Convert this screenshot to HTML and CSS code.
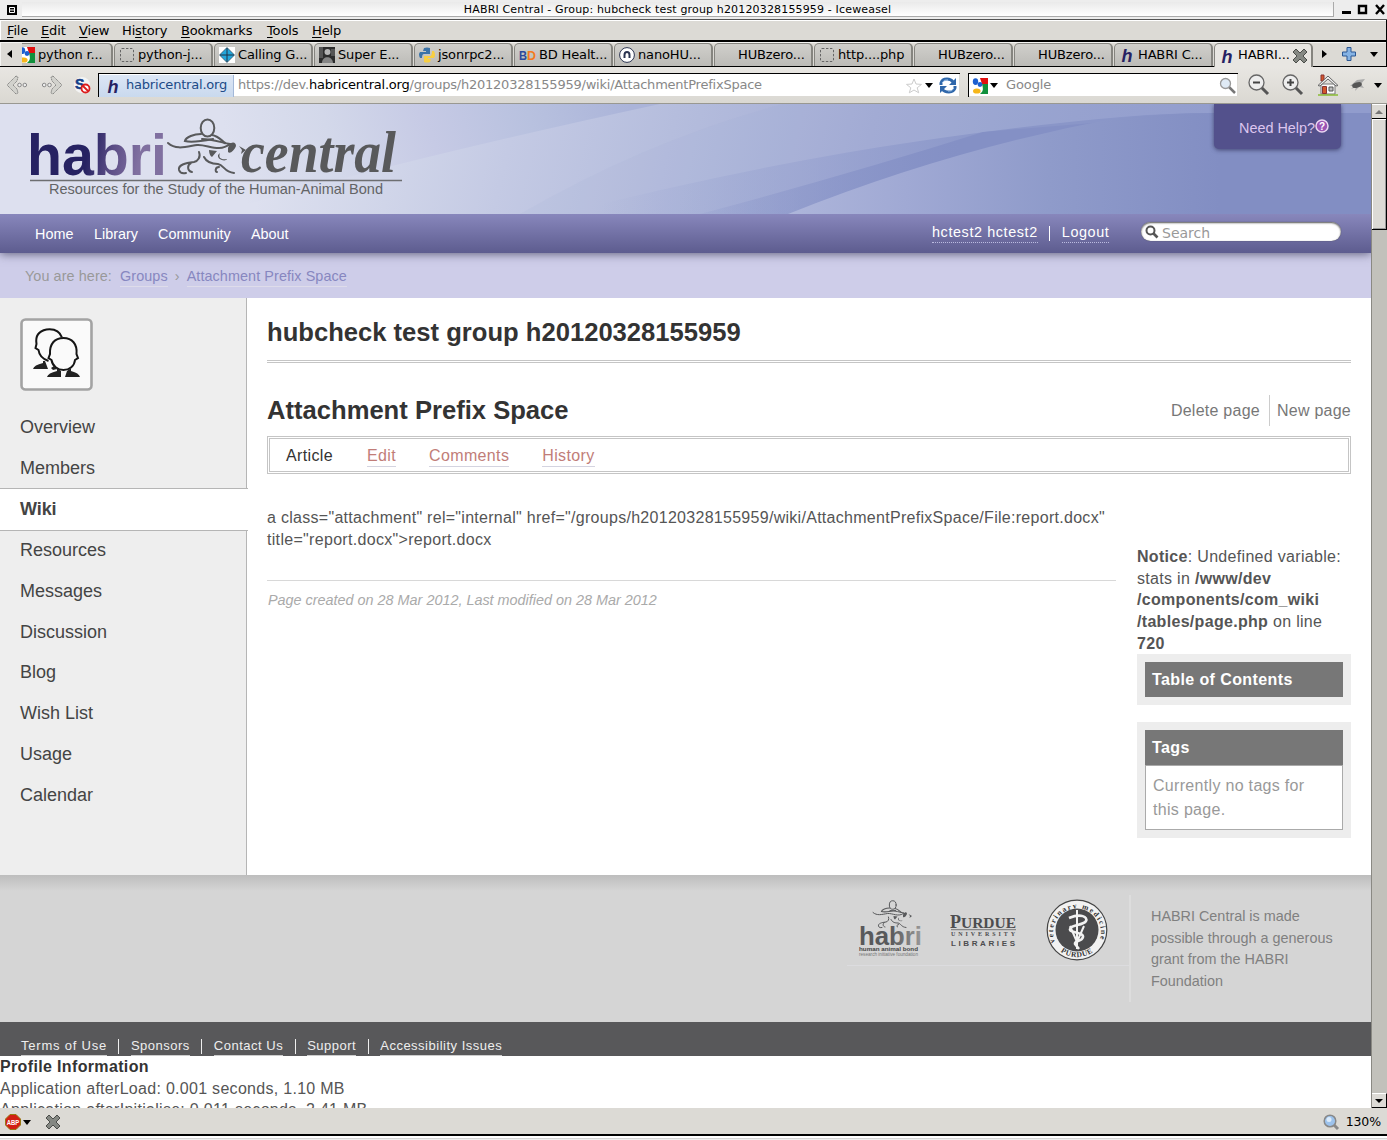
FILE: index.html
```html
<!DOCTYPE html>
<html lang="en">
<head>
<meta charset="utf-8">
<title>HABRI Central - Group: hubcheck test group h20120328155959</title>
<link rel="stylesheet" href="styles.css">
</head>
<body>
<svg width="0" height="0" class="defs">
  <defs>
    <symbol id="blank" viewBox="0 0 16 16"><rect x="1.5" y="1.5" width="13" height="13" rx="1.5" fill="none" stroke="#666" stroke-dasharray="2.4 1.6"/></symbol>
    <symbol id="h" viewBox="0 0 16 16"><text x="2.5" y="14.5" font-family="Liberation Sans" font-weight="bold" font-style="italic" font-size="18" fill="#262262">h</text></symbol>
    <symbol id="google" viewBox="0 0 16 16"><path d="M0 0h16v16H0z" fill="#fff"/><path d="M8 0h8v6H10z" fill="#e01010"/><path d="M10 6h6v10H8c4-3 3-6 2-10z" fill="#10903c"/><ellipse cx="3.5" cy="3.6" rx="2.7" ry="3.4" fill="#1c5fd0"/><circle cx="8" cy="6.5" r="2.4" fill="#1c5fd0"/><ellipse cx="4.8" cy="13" rx="3.8" ry="2.6" fill="#f6b619"/></symbol>
    <symbol id="x" viewBox="0 0 16 16"><path d="M4 1l4 4 4-4 3 3-4 4 4 4-3 3-4-4-4 4-3-3 4-4-4-4z" fill="#858883" stroke="#4b4d4a"/></symbol>
    <symbol id="arrow" viewBox="0 0 22 20"><path d="M10 1L1 10l9 9 2-1-1-4-4-4 4-4 1-4z" fill="#d2d2cd" stroke="#8a8a88" stroke-dasharray="1.5 .5"/><circle cx="13.5" cy="10" r="1.8" fill="#eee" stroke="#888"/><circle cx="18.8" cy="10" r="1.8" fill="#eee" stroke="#888"/></symbol>
    <symbol id="animal" viewBox="166 116 82 62">
      <g fill="none" stroke="#58595b" stroke-width="2" stroke-linecap="round">
        <ellipse cx="207.500" cy="128" rx="6.800" ry="8.500"/>
        <path d="M201 134c-7 0-15 3-16 7 6 2 18 0 28-2M212 135c6 1 9 5 13 8" stroke-width="2.200"/>
        <path d="M168 143c8 7 17 4 29 2 10-1 22 8 33-1-7-1-18-5-28-5"/>
        <path d="M199 152c2 5-1 9-5 10-9 1-16 3-15 8 1 3 3 4 7 3M191 163c-4 2-4 8 1 9"/>
        <path d="M204 157c3 6 8 7 14 7 6 1 6 8 16 9M219 167c-4 0-4 5-2 5"/>
      </g>
      <path d="M228 148c2-7 8-7 8-2-2 5-6 8-8 6zM209 150l8 1-5 6c-2-1-3-4-3-7zM220 153c-2 5 1 7 7 6-1 3-10 1-9-4zM239 146l7 4-5 4 1-4z" fill="#58595b"/>
    </symbol>
  </defs>
</svg>
<div class="window">
  <header class="titlebar">
    <svg width="22" height="19"><rect x="7" y="5" width="10" height="10"/><path d="M9.500 7.500h5v5h-5zM9 10h6" fill="none" stroke="#fff"/></svg>
    <div class="caption">HABRI Central - Group: hubcheck test group h20120328155959 - Iceweasel</div>
    <svg width="53" height="19" fill="none" stroke="#000"><path d="M8 12.500h9" stroke-width="3"/><path d="M25 6h7v7h-7z" stroke-width="2.400"/><path d="M42 5l8 9M50 5l-8 9" stroke-width="2.400"/></svg>
  </header>
  <nav class="menubar">
    <span class="m1"><u>F</u>ile</span><span class="m2"><u>E</u>dit</span><span class="m3"><u>V</u>iew</span><span class="m4">Hi<u>s</u>tory</span><span class="m5"><u>B</u>ookmarks</span><span class="m6"><u>T</u>ools</span><span><u>H</u>elp</span>
  </nav>
  <div class="tabs">
    <div class="tabscroll"><i class="left"></i></div>
    <div class="tab first"><svg width="16" height="16"><use href="#google"/></svg><span>python r...</span></div>
    <div class="tab"><svg width="16" height="16"><use href="#blank"/></svg><span>python-j...</span></div>
    <div class="tab"><svg width="16" height="16"><path d="M0 0h16v16H0z" fill="#fff"/><path d="M8 .5L15.500 8 8 15.500.5 8z" fill="#22a7dc" stroke="#345" stroke-width=".7"/><path d="M8 1v14M1 8h14" stroke="#234"/></svg><span>Calling G...</span></div>
    <div class="tab"><svg width="16" height="16"><path d="M0 0h16v16H0z" fill="#2c2c2c"/><path d="M0 0h4v11H0zM12 2h4v7h-4z" fill="#555"/><circle cx="8.500" cy="5" r="3" fill="#b5b5b5"/><path d="M3 16c0-7 10-8 11 0z" fill="#858585"/></svg><span>Super E...</span></div>
    <div class="tab"><svg width="16" height="16"><path d="M5 1q3-1 6 0v6H5q-2 0-2 4H1q-2-4 0-6h6V4H4z" fill="#3b73a8"/><path d="M11 15q-3 1-6 0V9h6q2 0 2-5h2q2 4 0 7H9v1h3z" fill="#f8cf42"/></svg><span>jsonrpc2...</span></div>
    <div class="tab"><svg width="17" height="16"><text x="0" y="13" font-family="Liberation Sans" font-size="12" font-weight="bold" fill="#2b4a9a" textLength="8" lengthAdjust="spacingAndGlyphs">B</text><text x="8" y="13" font-family="Liberation Sans" font-size="12" font-weight="bold" fill="#f47a20" textLength="9" lengthAdjust="spacingAndGlyphs">D</text></svg><span>BD Healt...</span></div>
    <div class="tab"><svg width="16" height="16"><circle cx="8" cy="8" r="7.400" fill="#fff" stroke="#2b3450"/><path d="M5.500 11V8q0-3 2.500-3t2.500 3v3" fill="none" stroke="#2b3450" stroke-width="2"/></svg><span>nanoHU...</span></div>
    <div class="tab"><svg width="16" height="16"></svg><span>HUBzero...</span></div>
    <div class="tab"><svg width="16" height="16"><use href="#blank"/></svg><span>http....php</span></div>
    <div class="tab"><svg width="16" height="16"></svg><span>HUBzero...</span></div>
    <div class="tab"><svg width="16" height="16"></svg><span>HUBzero...</span></div>
    <div class="tab"><svg width="16" height="16"><use href="#h"/></svg><span>HABRI C...</span></div>
    <div class="tab active"><svg width="16" height="16"><use href="#h"/></svg><span>HABRI...</span><svg class="close" width="16" height="16"><use href="#x"/></svg></div>
    <div class="tabtools"><i class="right"></i><svg width="16" height="16"><path d="M6 1.500h4V6h4.500v4H10v4.500H6V10H1.500V6H6z" fill="#86b3e4" stroke="#2b5793"/></svg><i class="down"></i></div>
  </div>
  <div class="toolbar">
    <svg class="back" width="22" height="20"><use href="#arrow"/></svg>
    <svg class="fwd" width="22" height="20"><use href="#arrow" transform="translate(22 0) scale(-1 1)"/></svg>
    <svg class="noscript" width="17" height="17"><circle cx="8" cy="8" r="8" fill="#f4f4f4"/><text x="1" y="12" font-family="Liberation Sans" font-weight="bold" font-size="14" fill="#153f88" stroke="#153f88" stroke-width=".6">S</text><circle cx="11.500" cy="11.500" r="4" fill="#fff" stroke="#dc1c1c" stroke-width="1.800"/><path d="M9 9l5 5" stroke="#dc1c1c" stroke-width="1.800"/></svg>
    <div class="urlbar">
      <div class="identity"><svg width="16" height="18"><use href="#h"/></svg><span>habricentral.org</span></div>
      <div class="url">https://dev.<b>habricentral.org</b>/groups/h20120328155959/wiki/AttachmentPrefixSpace</div>
      <svg width="16" height="16"><path d="M8 1l2 5 5.500.4-4.300 3.400 1.500 5L8 12l-4.700 2.800 1.500-5L.5 6.400 6 6z" fill="#fff" stroke="#ccc"/></svg>
      <i class="down"></i>
      <svg width="18" height="17" fill="none" stroke="#3068ab" stroke-width="3"><path d="M2 8V6q1-4 6-4 4 0 6 3M16 9v2q-1 4-6 4-5 0-7-3"/><path d="M17 1v7h-7zM1 16V9h7z" fill="#3068ab" stroke="none"/><path d="M3 6q2-4 6-3M15 11q-2 4-6 3" stroke="#a8c8ec" stroke-width="1"/></svg>
    </div>
    <div class="searchbar"><svg width="16" height="16"><use href="#google"/></svg><i class="down"></i><span>Google</span><svg width="17" height="17"><path d="M10 10l6 6" stroke="#777" stroke-width="2.500"/><circle cx="6.500" cy="6.500" r="5" fill="#dfeaf5" stroke="#999" stroke-width="1.300"/></svg></div>
    <svg class="zo" width="22" height="22"><path d="M13 13l7 7" stroke="#555" stroke-width="3"/><circle cx="8.500" cy="8.500" r="7.500" fill="#eee" stroke="#666" stroke-width="1.300"/><path d="M5 8.500h7" stroke="#444" stroke-width="2"/></svg>
    <svg class="zi" width="22" height="22"><path d="M13 13l7 7" stroke="#555" stroke-width="3"/><circle cx="8.500" cy="8.500" r="7.500" fill="#eee" stroke="#666" stroke-width="1.300"/><path d="M5 8.500h7M8.500 5v7" stroke="#444" stroke-width="2"/></svg>
    <svg class="home" width="22" height="22"><path d="M4 1h3v6H4z" fill="#d4572a" stroke="#833"/><path d="M4 10h14v10H4z" fill="#fafafa" stroke="#777"/><path d="M1 11.500L11 2l10 9.500-2 .5-8-7-8 7z" fill="#eee" stroke="#666"/><path d="M5.500 12.500h4v7h-4z" fill="#d4572a" stroke="#833"/><path d="M12 13h4v4h-4z" fill="#bbb" stroke="#555"/><path d="M1 21h20" stroke="#8b3" stroke-width="1.500"/></svg>
    <svg class="bug" width="18" height="14"><path d="M1 8l7-6 8-1-4 5 3 4-5-1-4 4 1-4-5 2 3-3z" fill="#aaa"/><ellipse cx="8" cy="7" rx="5" ry="2.600" fill="#555" transform="rotate(-18 8 7)"/></svg>
    <i class="down"></i>
  </div>

  <div class="viewport">
    <div class="page">
      <header class="banner">
        <svg class="waves" viewBox="0 0 1371 110" width="1371" height="110">
          <defs>
            <linearGradient id="g0" gradientUnits="userSpaceOnUse" x1="280" y1="0" x2="1220" y2="230"><stop offset="0" stop-color="#dde0ef"/><stop offset=".13" stop-color="#d0d5e9"/><stop offset=".24" stop-color="#c4cae4"/><stop offset=".4" stop-color="#b5bddd"/><stop offset=".6" stop-color="#a4add5"/><stop offset=".8" stop-color="#98a3d0"/><stop offset="1" stop-color="#929dce"/></linearGradient>
            <linearGradient id="g1" gradientUnits="userSpaceOnUse" x1="240" y1="80" x2="620" y2="-30"><stop offset="0" stop-color="#dde0ef"/><stop offset=".25" stop-color="#d3d8ea"/><stop offset=".5" stop-color="#c6cae5"/><stop offset=".75" stop-color="#b8c1df"/><stop offset="1" stop-color="#abb4d9"/></linearGradient>
            <linearGradient id="g2" gradientUnits="userSpaceOnUse" x1="600" y1="0" x2="1000" y2="0"><stop offset="0" stop-color="#939ece" stop-opacity="0"/><stop offset=".5" stop-color="#939ece" stop-opacity=".45"/><stop offset="1" stop-color="#8a96c8"/></linearGradient>
            <linearGradient id="g3" gradientUnits="userSpaceOnUse" x1="690" y1="0" x2="960" y2="0"><stop offset="0" stop-color="#8591c7" stop-opacity=".1"/><stop offset="1" stop-color="#8490c5"/></linearGradient>
            <linearGradient id="g4" gradientUnits="userSpaceOnUse" x1="790" y1="0" x2="1220" y2="0"><stop offset="0" stop-color="#adb5da"/><stop offset=".27" stop-color="#a0a9d4"/><stop offset=".6" stop-color="#8f9bca"/><stop offset="1" stop-color="#828ec3"/></linearGradient>
          </defs>
          <path d="M0 0h1371v110H0z" fill="url(#g0)"/>
          <path d="M0 0h660Q400 56 213 110H0z" fill="url(#g1)"/>
          <path d="M783 0H1371V110H520Q650 35 783 0z" fill="#8a99cc" opacity=".06"/>
          <path d="M560 110Q760 60 920 37 1120 8 1213 9H1371V110z" fill="url(#g2)"/>
          <path d="M700 110Q850 70 983 28L1213 9H1371V110z" fill="url(#g3)"/>
          <path d="M788 110Q950 45 1117 14 1170 9 1213 9H1371V110z" fill="url(#g4)"/>
        </svg>
        <svg class="logo" viewBox="26 112 380 90" width="380" height="90">
          <defs><linearGradient id="lg" gradientUnits="userSpaceOnUse" x1="30" y1="0" x2="164" y2="25"><stop offset=".62" stop-color="#262262"/><stop offset=".8" stop-color="#5b4d86"/><stop offset="1" stop-color="#8070a0"/></linearGradient></defs>
          <text x="27" y="174.500" class="sans" font-weight="bold" font-size="57" fill="url(#lg)" textLength="140" lengthAdjust="spacingAndGlyphs">habri</text>
          <use href="#animal" x="166" y="116" width="82" height="62"/>
          <text x="241" y="172" font-family="Liberation Serif" font-weight="bold" font-style="italic" font-size="60" fill="#58595b" textLength="155" lengthAdjust="spacingAndGlyphs">central</text>
          <path d="M30 180.500h372" stroke="#6d6e71" stroke-width="1.500"/>
          <text x="49" y="194" class="sans" font-size="15" fill="#636466" textLength="334" lengthAdjust="spacingAndGlyphs">Resources for the Study of the Human-Animal Bond</text>
        </svg>
        <div class="help"><span>Need Help?</span><svg width="14" height="14"><circle cx="7" cy="7" r="6" fill="#9a55b5" stroke="#ead7f2" stroke-width="1.500"/><text x="4.100" y="10.500" font-family="Liberation Sans" font-weight="bold" font-size="10" fill="#fff">?</text></svg></div>
      </header>
      <nav class="nav">
        <a class="n1">Home</a><a class="n2">Library</a><a class="n3">Community</a><a>About</a>
        <div class="account"><a class="dotted">hctest2 hctest2</a><i></i><a class="dotted">Logout</a></div>
        <div class="search"><svg width="14" height="14" fill="none" stroke="#555"><circle cx="5.500" cy="5.500" r="4" stroke-width="2"/><path d="M8.500 8.500l4 4" stroke-width="2.600"/></svg><span>Search</span></div>
      </nav>
      <div class="crumbs"><span>You are here:</span><a>Groups</a><i>›</i><a>Attachment Prefix Space</a></div>
      <div class="main">
        <aside class="side">
          <svg class="group" width="73" height="73" viewBox="0 0 73 73"><rect x="1.500" y="1.500" width="70" height="70" rx="4" fill="#fafafa" stroke="#a3a3a3" stroke-width="2.600"/>
            <g fill="#fafafa" stroke="#151515" stroke-width="2"><path d="M28.500 43q-9-3-10-11l-3-2 1-4q-2-12 10-14.500 12-1.500 15.500 8"/><path d="M43.500 20c-9 0-14 6-13.500 16l-1.500 4 3 2c1 6 6 10 12 10s11-4 11.500-10l3-2-1.500-4C57.500 26 52 20 43.500 20z"/></g>
            <path d="M13 51q1-4 10-6v-2h2l3 8zM27 59q1-4 10-6v-3l4 3v6zM60 59q-1-4-9-6v-3l-4 3-2 6zM31 50l3-2 3 3-4 1z" fill="#222"/></svg>
          <ul><li>Overview</li><li>Members</li><li class="current">Wiki</li><li>Resources</li><li>Messages</li><li>Discussion</li><li>Blog</li><li>Wish List</li><li>Usage</li><li>Calendar</li></ul>
        </aside>
        <main class="content">
          <h1>hubcheck test group h20120328155959</h1>
          <div class="heading"><h2>Attachment Prefix Space</h2><div class="actions"><a>Delete page</a><a>New page</a></div></div>
          <div class="subtabs"><b>Article</b><a>Edit</a><a>Comments</a><a>History</a></div>
          <div class="columns">
            <article><p><span>a class="attachment" rel="internal" href="/groups/h20120328155959/wiki/AttachmentPrefixSpace/File:report.docx"</span><br>title="report.docx"&gt;report.docx</p><div class="stamp">Page created on 28 Mar 2012, Last modified on 28 Mar 2012</div></article>
            <aside class="extra">
              <p><b>Notice</b>: Undefined variable:<br>stats in <b>/www/dev<br>/components/com_wiki<br>/tables/page.php</b> on line<br><b>720</b></p>
              <section class="box"><h3>Table of Contents</h3></section>
              <section class="box"><h3>Tags</h3><div>Currently no tags for<br>this page.</div></section>
            </aside>
          </div>
        </main>
      </div>
      <footer class="sponsors">
        <div class="marks">
          <svg width="64" height="60" viewBox="857 898 64 60"><use href="#animal" x="871" y="899" width="41" height="31"/><defs><linearGradient id="gg" x1="0" x2="1"><stop offset=".5" stop-color="#58595b"/><stop offset="1" stop-color="#999"/></linearGradient></defs><text x="858" y="944.500" class="sans" font-weight="bold" font-size="26" fill="url(#gg)" textLength="63" lengthAdjust="spacingAndGlyphs">habri</text><text x="858" y="951" class="sans" font-weight="bold" font-size="6" fill="#444" textLength="59" lengthAdjust="spacingAndGlyphs">human animal bond</text><text x="858" y="956" class="sans" font-size="4.500" fill="#777" textLength="59" lengthAdjust="spacingAndGlyphs">research initiative foundation</text></svg>
          <svg width="68" height="36" viewBox="950 913 68 36" fill="#4d4d4f"><g font-family="Liberation Serif" font-weight="bold"><text x="950" y="928" font-size="18">P</text><text x="961" y="928" font-size="15" textLength="55" lengthAdjust="spacingAndGlyphs">URDUE</text><text x="951" y="936" font-size="6" textLength="64">UNIVERSITY</text></g><path d="M951 929.700h65" stroke="#4d4d4f" stroke-width=".7"/><text x="951" y="946" class="sans" font-weight="bold" font-size="8" textLength="64">LIBRARIES</text></svg>
          <svg width="62" height="62" viewBox="0 0 62 62"><defs><path id="ring" d="M9.500 44A24 24 0 1 1 52.500 44"/><path id="ring2" d="M13 51.500A28 28 0 0 0 49 51.500"/></defs><circle cx="31" cy="31" r="29.800" fill="#f2f2f2" stroke="#444" stroke-width="1.200"/><circle cx="31" cy="31" r="21.500" fill="#4b4b4d"/><g font-family="Liberation Serif" font-weight="bold" font-size="7.500" fill="#333"><text textLength="92"><textPath href="#ring" startOffset="1">veterinary medicine</textPath></text><text textLength="34"><textPath href="#ring2" startOffset="2">PURDUE</textPath></text></g><path d="M31 11v39" stroke="#f2f2f2" stroke-width="2"/><path d="M24 27l7 16 7-16" fill="none" stroke="#f2f2f2" stroke-width="2"/><path d="M23 19c12-5 19-1 17 3-3 5-15 3-16 8-1 4 14 3 13 8s-9 3-8 7l4 5" fill="none" stroke="#f2f2f2" stroke-width="2.600"/></svg>
        </div>
        <p>HABRI Central is made<br>possible through a generous<br>grant from the HABRI<br>Foundation</p>
      </footer>
      <div class="legal"><a class="terms">Terms of Use</a><i></i><a>Sponsors</a><i></i><a>Contact Us</a><i></i><a>Support</a><i></i><a>Accessibility Issues</a></div>
      <div class="profile"><b>Profile Information</b><br>Application afterLoad: 0.001 seconds, 1.10 MB<br>Application afterInitialise: 0.011 seconds, 2.41 MB</div>
    </div>
    <div class="scroll"><div class="btn"><i class="up"></i></div><div class="thumb"></div><div class="btn end"><i class="down"></i></div></div>
  </div>
  <footer class="status">
    <svg width="16" height="16"><path d="M5 .5h6L15.500 5v6L11 15.500H5L.5 11V5z" fill="#d21f14" stroke="#971"/><text x="1.800" y="11" font-family="Liberation Sans" font-weight="bold" font-size="7.500" fill="#fff" textLength="12.500" lengthAdjust="spacingAndGlyphs">ABP</text></svg><i class="down"></i>
    <svg class="sx" width="16" height="16"><use href="#x"/></svg>
    <svg class="sz" width="17" height="17"><path d="M11 11l4 4" stroke="#888" stroke-width="3"/><circle cx="7" cy="7" r="5.800" fill="#9cc2ec" stroke="#888" stroke-width="1.500"/><circle cx="6" cy="5.500" r="2.500" fill="#dcebfa"/></svg><span>130%</span>
  </footer>
  <div class="frame"></div>
</div>
</body>
</html>
```
FILE: styles.css
```css
* { box-sizing: border-box; }
body { margin: 0; background: #dcdad5; font-family: "DejaVu Sans", sans-serif; font-size: 13px; color: #000; overflow: hidden; }
svg { display: block; flex: none; }
.defs { position: absolute; }
.sans { font-family: "Liberation Sans", Arial, sans-serif; }
.window { width: 1387px; height: 1140px; display: flex; flex-direction: column; overflow: hidden; white-space: nowrap; }
.window > * { flex: none; }
i.down, i.left, i.right, i.up { flex: none; width: 0; height: 0; border: solid transparent; }
i.down { border-width: 5px 4.5px 0; border-top-color: #000; }
i.left { border-width: 4px 5px 4px 0; border-right-color: #000; }
i.right { border-width: 4px 0 4px 5px; border-left-color: #000; }
i.up { border-width: 0 4px 4px; border-bottom-color: #777; }

.titlebar { height: 20px; display: flex; background: #ededed; border-bottom: 1px solid #555; }
.caption { flex: 1; height: 15px; margin-top: 2px; background: linear-gradient(#eaeaea, #fff); border: solid #aaa; border-width: 0 1px 1px 0; font-size: 11px; line-height: 15px; text-align: center; letter-spacing: .16px; }
.menubar { height: 22px; border: solid #000; border-width: 0 1px 2px 0; box-shadow: inset 1px 1px #fff; padding-left: 7px; display: flex; line-height: 21px; letter-spacing: -.15px; }
.menubar u { text-underline-offset: 2px; }
.m1 { width: 34px; } .m2 { width: 38px; } .m3 { width: 43px; } .m4 { width: 59px; } .m5 { width: 86px; } .m6 { width: 45px; }

.tabs { height: 25px; display: flex; border-bottom: 1px solid #000; border-right: 1px solid #000; box-shadow: inset 1px 1px #f4f4f2; }
.tabscroll { width: 22px; display: flex; align-items: center; padding-left: 7px; }
.tab { width: 99px; margin-right: 1px; margin-top: 1px; height: 23px; border: 1px solid #85847f; border-width: 1px 2px 0 1px; border-radius: 5px 5px 0 0; background: linear-gradient(#d0cfcb, #bcbbb7); display: flex; align-items: center; gap: 3px; padding-left: 4px; overflow: hidden; }
.tab span { letter-spacing: -.15px; margin-top: -2px; }
.tab.first { width: 91px; padding: 0; border-left: 0; border-top-left-radius: 0; gap: 0; }
.tab.first svg { margin-left: -3px; margin-right: 3px; }
.tab.active { background: #e8e6e2; height: 24px; }
.close { margin-left: -1px; }
.tabtools { display: flex; align-items: center; padding-left: 8px; gap: 14px; flex: 1; }
.tabtools .down { margin-left: -1px; }

.toolbar { height: 37px; display: flex; align-items: center; background: linear-gradient(#e8e6e2, #dad8d2); border-bottom: 1px solid #999891; padding-left: 6px; }
.fwd { margin-left: 13px; }
.noscript { margin-left: 11px; }
.urlbar, .searchbar { height: 24px; display: flex; align-items: center; background: #fff; border: solid #000; border-width: 1px 0 0 1px; box-shadow: inset -1px -1px #dcdad5; }
.urlbar { width: 862px; margin-left: 7px; }
.identity { width: 135px; height: 22px; background: linear-gradient(#dce6f5, #c9d9ee); border-right: 1px solid #a3b8d8; display: flex; align-items: center; color: #204a87; padding-left: 6px; gap: 5px; letter-spacing: -.2px; }
.url { flex: 1; padding-left: 4px; color: #888; letter-spacing: -.23px; margin-top: -2px; }
.identity span { margin-top: -2px; }
.url b { font-weight: normal; color: #000; }
.urlbar > .down { margin: 0 6px 0 3px; }
.urlbar > svg:last-child { margin-right: 3px; }
.searchbar { width: 270px; margin-left: 8px; padding-left: 3px; }
.searchbar .down { margin-left: 2px; }
.searchbar span { flex: 1; padding-left: 8px; color: #888; letter-spacing: -.1px; margin-top: -2px; }
.searchbar svg:last-child { margin-right: 2px; }
.zo { margin-left: 10px; } .zi { margin-left: 12px; } .home { margin-left: 13px; } .bug { margin: 0 7px 0 10px; }

.viewport { height: 1004px; display: flex; }
.page { width: 1371px; height: 1004px; overflow: hidden; background: #fff; font-family: "Liberation Sans", Arial, sans-serif; font-size: 14.4px; }
.banner { height: 110px; position: relative; z-index: 2; }
.waves { position: absolute; left: 0; top: 0; }
.logo { position: absolute; left: 26px; top: 8px; overflow: visible; }
.help { position: absolute; left: 1214px; top: 0; width: 127px; height: 45px; background: #53518c; border-radius: 0 0 5px 5px; box-shadow: 0 1px 4px rgba(40,40,80,.7); color: #dcc6ee; padding: 15px 0 0 25px; display: flex; }
.help span { line-height: 18px; width: 76px; }
.nav { height: 39px; background: linear-gradient(#8887bc, #5d5c8f); color: #fff; display: flex; padding-left: 35px; line-height: 40px; position: relative; box-shadow: 0 1px 9px rgba(60,60,90,.75); }
.n1 { width: 59px; } .n2 { width: 64px; } .n3 { width: 93px; }
.account { position: absolute; left: 932px; top: 10px; display: flex; line-height: 17px; letter-spacing: .6px; }
.account i { width: 1px; height: 15px; background: #fff; margin: 2px 12px 0 11px; }
.dotted { height: 19px; border-bottom: 1px dotted #bbbbe0; }
.search { position: absolute; left: 1141px; top: 8px; width: 200px; height: 19px; border-radius: 10px; background: #fff; box-shadow: inset 0 1px 2px #555, 0 0 1px #444; display: flex; align-items: center; padding-left: 4px; gap: 3px; color: #999; font-family: "DejaVu Sans", sans-serif; font-size: 14px; line-height: 20px; }
.search span { padding-top: 2px; }
.crumbs { height: 45px; background: #cecde9; display: flex; padding: 14px 0 0 25px; color: #999; line-height: 18px; letter-spacing: .08px; }
.crumbs span { width: 95px; }
.crumbs i { width: 19px; padding-left: 7px; font-style: normal; }
.crumbs a { color: #8787c0; height: 20px; border-bottom: 1px solid #dedcea; }
.main { height: 577px; display: flex; }
.side { width: 247px; background: #eee; border-right: 1px solid #b5b5b5; padding-top: 20px; }
.group { margin-left: 20px; }
.side ul { list-style: none; margin: 16px 0 0; padding: 0; font-size: 18px; line-height: 40.7px; color: #444; }
.side li { padding-left: 20px; height: 40.7px; }
.side .current { width: 248px; background: #fff; border: solid #b5b5b5; border-width: 1px 0; height: 43px; line-height: 40px; font-weight: bold; letter-spacing: -.1px; position: relative; margin-bottom: -1px; }
.content { width: 1084px; margin-left: 20px; }
h1, h2, h3, p { margin: 0; }
h1 { height: 65px; padding-top: 19px; font-size: 25.6px; line-height: 30px; color: #333; border-bottom: 3px double #c5c5c5; }
.heading { display: flex; justify-content: space-between; height: 73px; padding-top: 32px; }
h2 { font-size: 25.6px; line-height: 30px; color: #333; }
.actions { display: flex; font-size: 16px; color: #777; letter-spacing: .25px; line-height: 32px; height: 31px; }
.actions a + a { border-left: 1px solid #ccc; margin-left: 9px; padding-left: 7px; }
.subtabs { height: 38px; border: 3px double #c5c5c5; padding: 7px 0 0 16px; display: flex; gap: 33px; font-size: 16px; line-height: 20px; letter-spacing: .36px; }
.subtabs b { font-weight: normal; color: #333; width: 48px; }
.subtabs a { color: #c17d78; border-bottom: 1px solid #d4d4e0; height: 21px; }
.columns { display: flex; justify-content: space-between; font-size: 16px; letter-spacing: .31px; line-height: 21.7px; color: #555; }
article { width: 849px; padding-top: 33px; }
article p { height: 73px; }
article p span { letter-spacing: .285px; }
.stamp { border-top: 1px solid #d8d8d8; padding: 9px 0 0 1px; font-style: italic; font-size: 14.4px; letter-spacing: 0; color: #aaa; }
.extra { width: 214px; padding-top: 72px; }
.box { background: #ededed; padding: 8px; margin-bottom: 17px; }
.extra p { height: 108px; }
.box h3 { background: #777; color: #fff; font-size: 16px; height: 35px; line-height: 35px; padding-left: 7px; letter-spacing: .4px; }
.box div { border: 1px solid #aaa; background: #fff; height: 65px; padding: 8px 7px; line-height: 24px; color: #999; }
.sponsors { height: 147px; background: linear-gradient(#bdbdbd, #d5d5d5 16px); display: flex; padding-left: 847px; }
.marks { width: 282px; height: 91px; display: flex; border-bottom: 1px solid #dcdcdf; padding: 23px 0 0 11px; }
.marks svg:nth-child(2) { margin: 15px 0 0 28px; }
.marks svg:nth-child(3) { margin: 1px 0 0 28px; }
.sponsors p { margin-top: 20px; height: 107px; border-left: 2px solid #ddd; padding: 11px 0 0 20px; line-height: 21.7px; color: #808080; }
.legal { height: 34px; background: #58585a; display: flex; padding: 13px 0 0 21px; font-size: 13px; letter-spacing: .5px; color: #eee; line-height: 21px; }
.legal a { height: 21px; border-bottom: 1px solid #ccc; }
.legal .terms { letter-spacing: .78px; }
.legal i { width: 1px; height: 15px; margin: 4px 11.5px 0; background: #eee; }
.profile { font-size: 16px; letter-spacing: .29px; line-height: 21.7px; color: #555; }
.profile b { color: #333; letter-spacing: .35px; }
.scroll { width: 16px; height: 1004px; background: #c2c1bb; border-left: 1px solid #8a8983; display: flex; flex-direction: column; }
.btn { height: 15px; background: #dcdad5; border: solid #000; border-width: 1px 1px 1px 0; border-top-color: #fff; display: flex; align-items: center; justify-content: center; flex: none; }
.end { margin-top: auto; }
.end .down { border-width: 4px 4px 0; }
.thumb { height: 111px; background: #dcdad5; border: solid #000; border-width: 0 1px 1px 0; box-shadow: inset 1px 1px #fff, inset -1px -1px #999; }
.status { height: 26px; display: flex; align-items: center; padding: 2px 6px 0 5px; }
.status .down { margin-left: 2px; }
.sx { margin-left: 14px; }
.sz { margin-left: auto; margin-right: 6px; }
.status span { font-size: 12.5px; letter-spacing: -.1px; margin-top: -2px; }
.frame { height: 6px; border-top: 2px solid #000; background: linear-gradient(#fff 2px, #bbb 2px, #eee 3px); }
```
